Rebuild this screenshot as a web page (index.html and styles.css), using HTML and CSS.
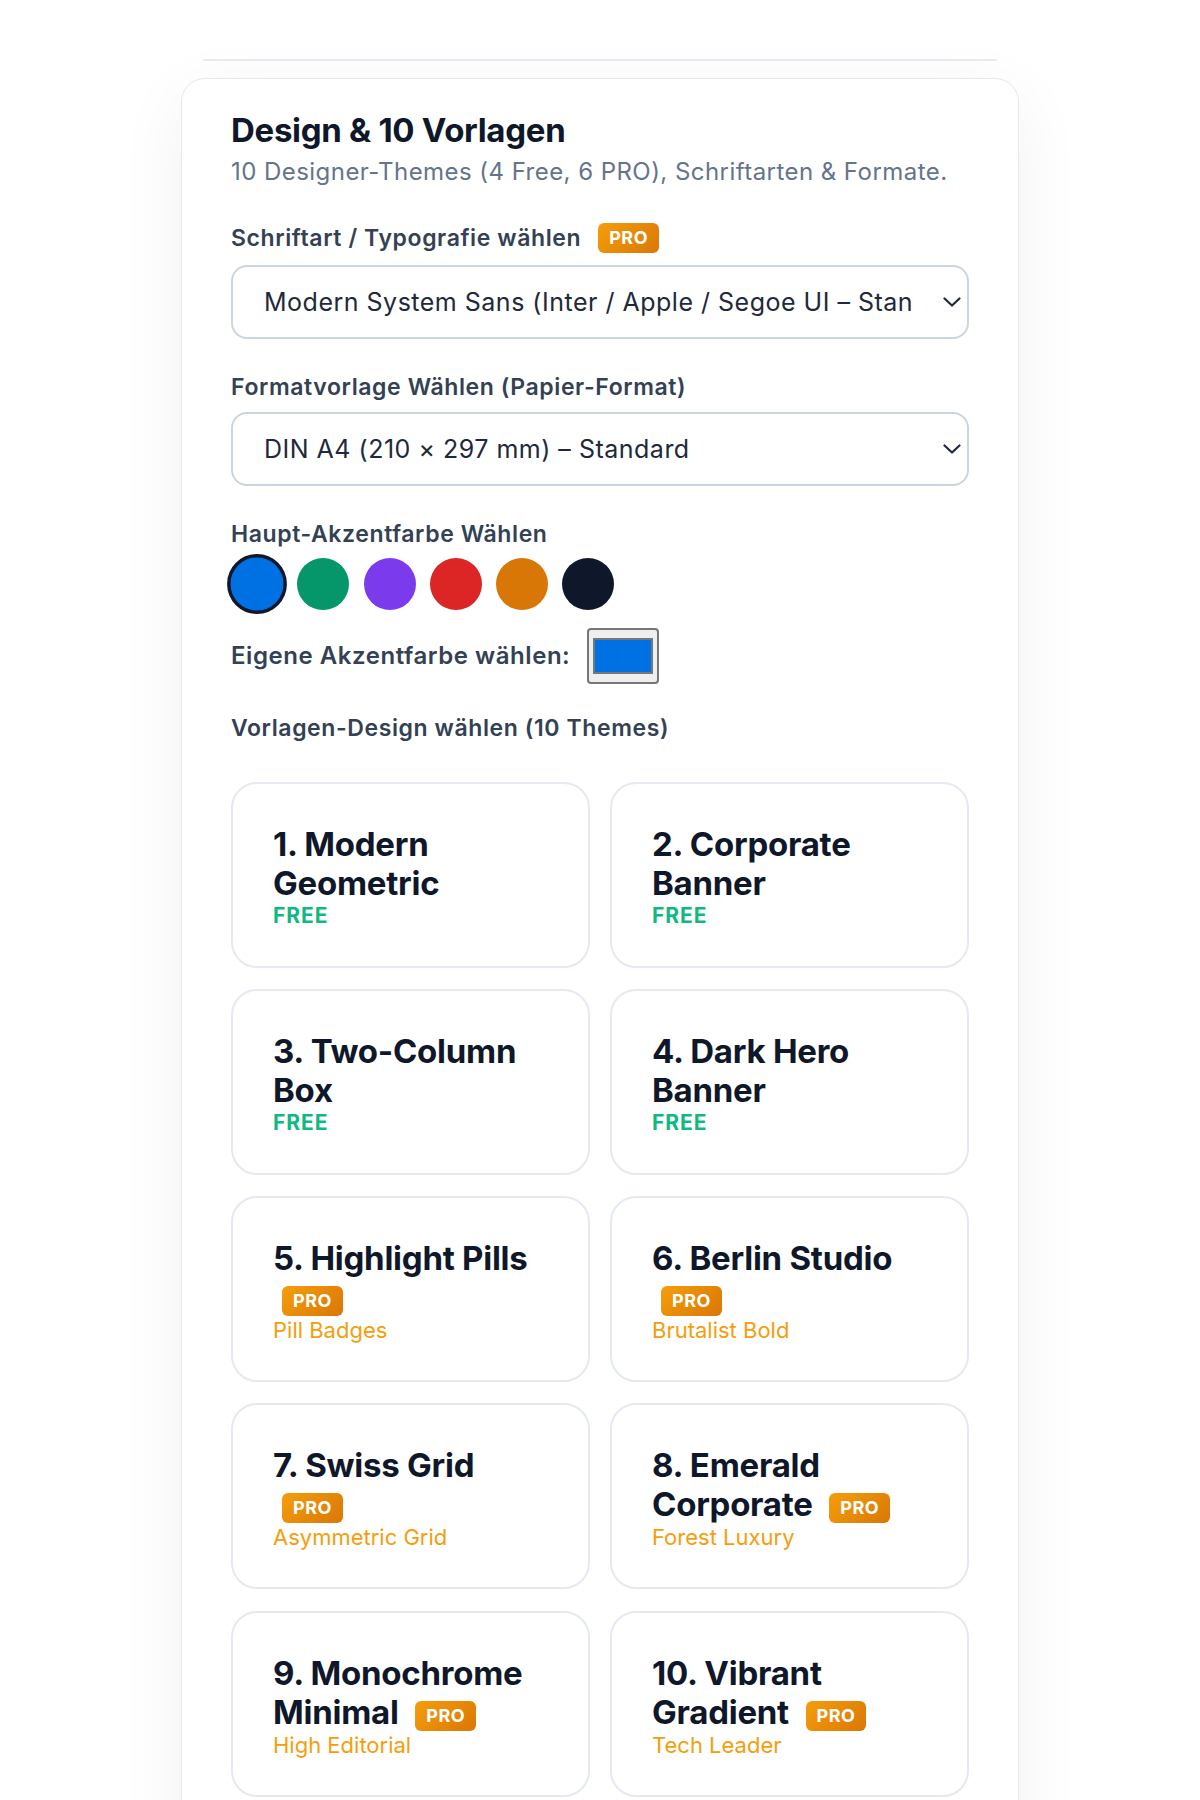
FILE: index.html
```html
<!DOCTYPE html>
<html lang="de">
<head>
<meta charset="utf-8">
<title>Design &amp; 10 Vorlagen</title>
<link rel="stylesheet" href="styles.css">
</head>
<body>
<div class="page">
  <div class="top-rule"></div>
  <section class="panel">
    <h2 class="panel-title">Design &amp; 10 Vorlagen</h2>
    <p class="panel-sub">10 Designer-Themes (4 Free, 6 PRO), Schriftarten &amp; Formate.</p>

    <div class="field field-first">
      <div class="label-row">
        <span class="label">Schriftart / Typografie wählen</span>
        <span class="pro">PRO</span>
      </div>
      <div class="select-wrap">
        <select class="select">
          <option>Modern System Sans (Inter / Apple / Segoe UI – Standard)</option>
        </select>
        <svg class="chevron" viewBox="0 0 18 10" width="18" height="10"><path d="M1.5 1.5 L9 8.5 L16.5 1.5" fill="none" stroke="#1e293b" stroke-width="2.2" stroke-linecap="round" stroke-linejoin="round"/></svg>
      </div>
    </div>

    <div class="field field-format">
      <div class="label-row">
        <span class="label">Formatvorlage Wählen (Papier-Format)</span>
      </div>
      <div class="select-wrap">
        <select class="select">
          <option>DIN A4 (210 × 297 mm) – Standard</option>
        </select>
        <svg class="chevron" viewBox="0 0 18 10" width="18" height="10"><path d="M1.5 1.5 L9 8.5 L16.5 1.5" fill="none" stroke="#1e293b" stroke-width="2.2" stroke-linecap="round" stroke-linejoin="round"/></svg>
      </div>
    </div>

    <div class="field field-colors">
      <div class="label-row">
        <span class="label">Haupt-Akzentfarbe Wählen</span>
      </div>
      <div class="swatches">
        <span class="swatch swatch-blue is-active"></span>
        <span class="swatch swatch-green"></span>
        <span class="swatch swatch-purple"></span>
        <span class="swatch swatch-red"></span>
        <span class="swatch swatch-orange"></span>
        <span class="swatch swatch-dark"></span>
      </div>
      <div class="custom-color">
        <span class="label label-custom">Eigene Akzentfarbe wählen:</span>
        <input class="color-input" type="color" value="#0071e3">
      </div>
    </div>

    <div class="field field-last">
      <div class="label-row">
        <span class="label">Vorlagen-Design wählen (10 Themes)</span>
      </div>
    </div>

    <div class="themes">
      <div class="theme">
        <div class="theme-title">1. Modern Geometric</div>
        <div class="free">FREE</div>
      </div>
      <div class="theme">
        <div class="theme-title">2. Corporate Banner</div>
        <div class="free">FREE</div>
      </div>
      <div class="theme">
        <div class="theme-title">3. Two-Column Box</div>
        <div class="free">FREE</div>
      </div>
      <div class="theme">
        <div class="theme-title">4. Dark Hero Banner</div>
        <div class="free">FREE</div>
      </div>
      <div class="theme">
        <div class="theme-title">5. Highlight Pills <span class="pro pro-inline">PRO</span></div>
        <div class="theme-sub">Pill Badges</div>
      </div>
      <div class="theme">
        <div class="theme-title">6. Berlin Studio <span class="pro pro-inline">PRO</span></div>
        <div class="theme-sub">Brutalist Bold</div>
      </div>
      <div class="theme">
        <div class="theme-title">7. Swiss Grid <span class="pro pro-inline">PRO</span></div>
        <div class="theme-sub">Asymmetric Grid</div>
      </div>
      <div class="theme">
        <div class="theme-title">8. Emerald Corporate <span class="pro pro-inline">PRO</span></div>
        <div class="theme-sub">Forest Luxury</div>
      </div>
      <div class="theme">
        <div class="theme-title">9. Monochrome Minimal <span class="pro pro-inline">PRO</span></div>
        <div class="theme-sub">High Editorial</div>
      </div>
      <div class="theme">
        <div class="theme-title">10. Vibrant Gradient <span class="pro pro-inline">PRO</span></div>
        <div class="theme-sub">Tech Leader</div>
      </div>
    </div>
  </section>
</div>
</body>
</html>
```

FILE: styles.css
```css
* { box-sizing: border-box; }

html, body {
  margin: 0;
  padding: 0;
  background: #ffffff;
  font-family: Inter, "Noto Sans", "DejaVu Sans", sans-serif;
  color: #0f172a;
}

.page {
  padding-top: 59px;
}

.top-rule {
  width: 794px;
  height: 2px;
  margin: 0 auto;
  background: #e7ecf2;
}

.panel {
  width: 838px;
  margin: 17px auto 0;
  padding: 32px 49px 60px;
  background: #ffffff;
  border: 1px solid #e4e9f0;
  border-radius: 24px;
  box-shadow: 0 18px 70px rgba(15, 23, 42, 0.06);
}

.panel-title {
  margin: 0;
  font-size: 33px;
  line-height: 38px;
  font-weight: 700;
  letter-spacing: -0.3px;
  color: #0f172a;
}

.panel-sub {
  margin: 8px 0 0;
  font-size: 24px;
  line-height: 30px;
  font-weight: 400;
  letter-spacing: 0.45px;
  color: #64748b;
}

.field { margin-top: 31px; }
.field-first { margin-top: 35px; }
.field-format { margin-top: 32px; }
.field-colors { margin-top: 32px; }
.field-last { margin-top: 28px; }

.label-row {
  display: flex;
  align-items: center;
  gap: 17px;
  height: 32px;
}

.label {
  font-size: 23px;
  line-height: 32px;
  font-weight: 600;
  letter-spacing: 0.6px;
  color: #334155;
}

.label-custom {
  font-size: 24px;
  letter-spacing: 0.55px;
}

.pro {
  display: inline-block;
  height: 30px;
  padding: 0 11px;
  border-radius: 6px;
  background: linear-gradient(135deg, #f59e0b 0%, #d97706 100%);
  color: #ffffff;
  font-size: 18px;
  line-height: 30px;
  font-weight: 700;
  letter-spacing: 0.5px;
}

.select-wrap {
  position: relative;
  margin-top: 11px;
}

.field-format .select-wrap { margin-top: 8.5px; }

.select {
  display: block;
  width: 100%;
  height: 74px;
  padding: 0 54px 0 31px;
  border: 2px solid #cbd5e1;
  border-radius: 16px;
  background: #ffffff;
  font-family: Inter, "Noto Sans", sans-serif;
  font-size: 25px;
  letter-spacing: 0.5px;
  color: #1e293b;
  -webkit-appearance: none;
  appearance: none;
  outline: none;
}

.chevron {
  position: absolute;
  right: 8px;
  top: 50%;
  transform: translateY(-50%);
  pointer-events: none;
}

.swatches {
  display: flex;
  align-items: center;
  gap: 14.3px;
  margin-top: 8px;
}

.swatch {
  display: block;
  width: 52px;
  height: 52px;
  border-radius: 50%;
  border: 3px solid transparent;
}

.swatch.is-active {
  border-color: #0f172a;
  transform: scale(1.15);
}

.swatch-blue { background: #0071e3; }
.swatch-green { background: #059669; }
.swatch-purple { background: #7c3aed; }
.swatch-red { background: #dc2626; }
.swatch-orange { background: #d97706; }
.swatch-dark { background: #0f172a; }

.custom-color {
  display: flex;
  align-items: center;
  gap: 17px;
  margin-top: 18px;
}

.color-input {
  width: 72px;
  height: 56px;
  margin: 0;
  padding: 0;
  border: 2px solid #767676;
  border-radius: 4px;
  background: #efefef;
  -webkit-appearance: none;
  appearance: none;
  cursor: pointer;
}

.color-input::-webkit-color-swatch-wrapper {
  padding: 8px 4px;
}

.color-input::-webkit-color-swatch {
  border: 2px solid #777777;
  border-radius: 0;
}

.themes {
  display: grid;
  grid-template-columns: 1fr 1fr;
  column-gap: 20px;
  row-gap: 21.3px;
  margin-top: 38px;
}

.theme {
  height: 186px;
  padding: 41px 50px 0 40px;
  border: 2px solid #e4e9f2;
  border-radius: 26px;
  background: #ffffff;
}

.theme-title {
  font-size: 33px;
  line-height: 39px;
  font-weight: 700;
  letter-spacing: -0.25px;
  color: #0f172a;
}

.pro-inline {
  margin-left: 9px;
  vertical-align: middle;
  position: relative;
  top: 1px;
}

.free {
  margin-top: 0;
  font-size: 21px;
  line-height: 26px;
  font-weight: 700;
  letter-spacing: 1px;
  color: #10b981;
}

.theme-sub {
  margin-top: 0;
  font-size: 22px;
  line-height: 26px;
  font-weight: 400;
  color: #f59e0b;
}
```
